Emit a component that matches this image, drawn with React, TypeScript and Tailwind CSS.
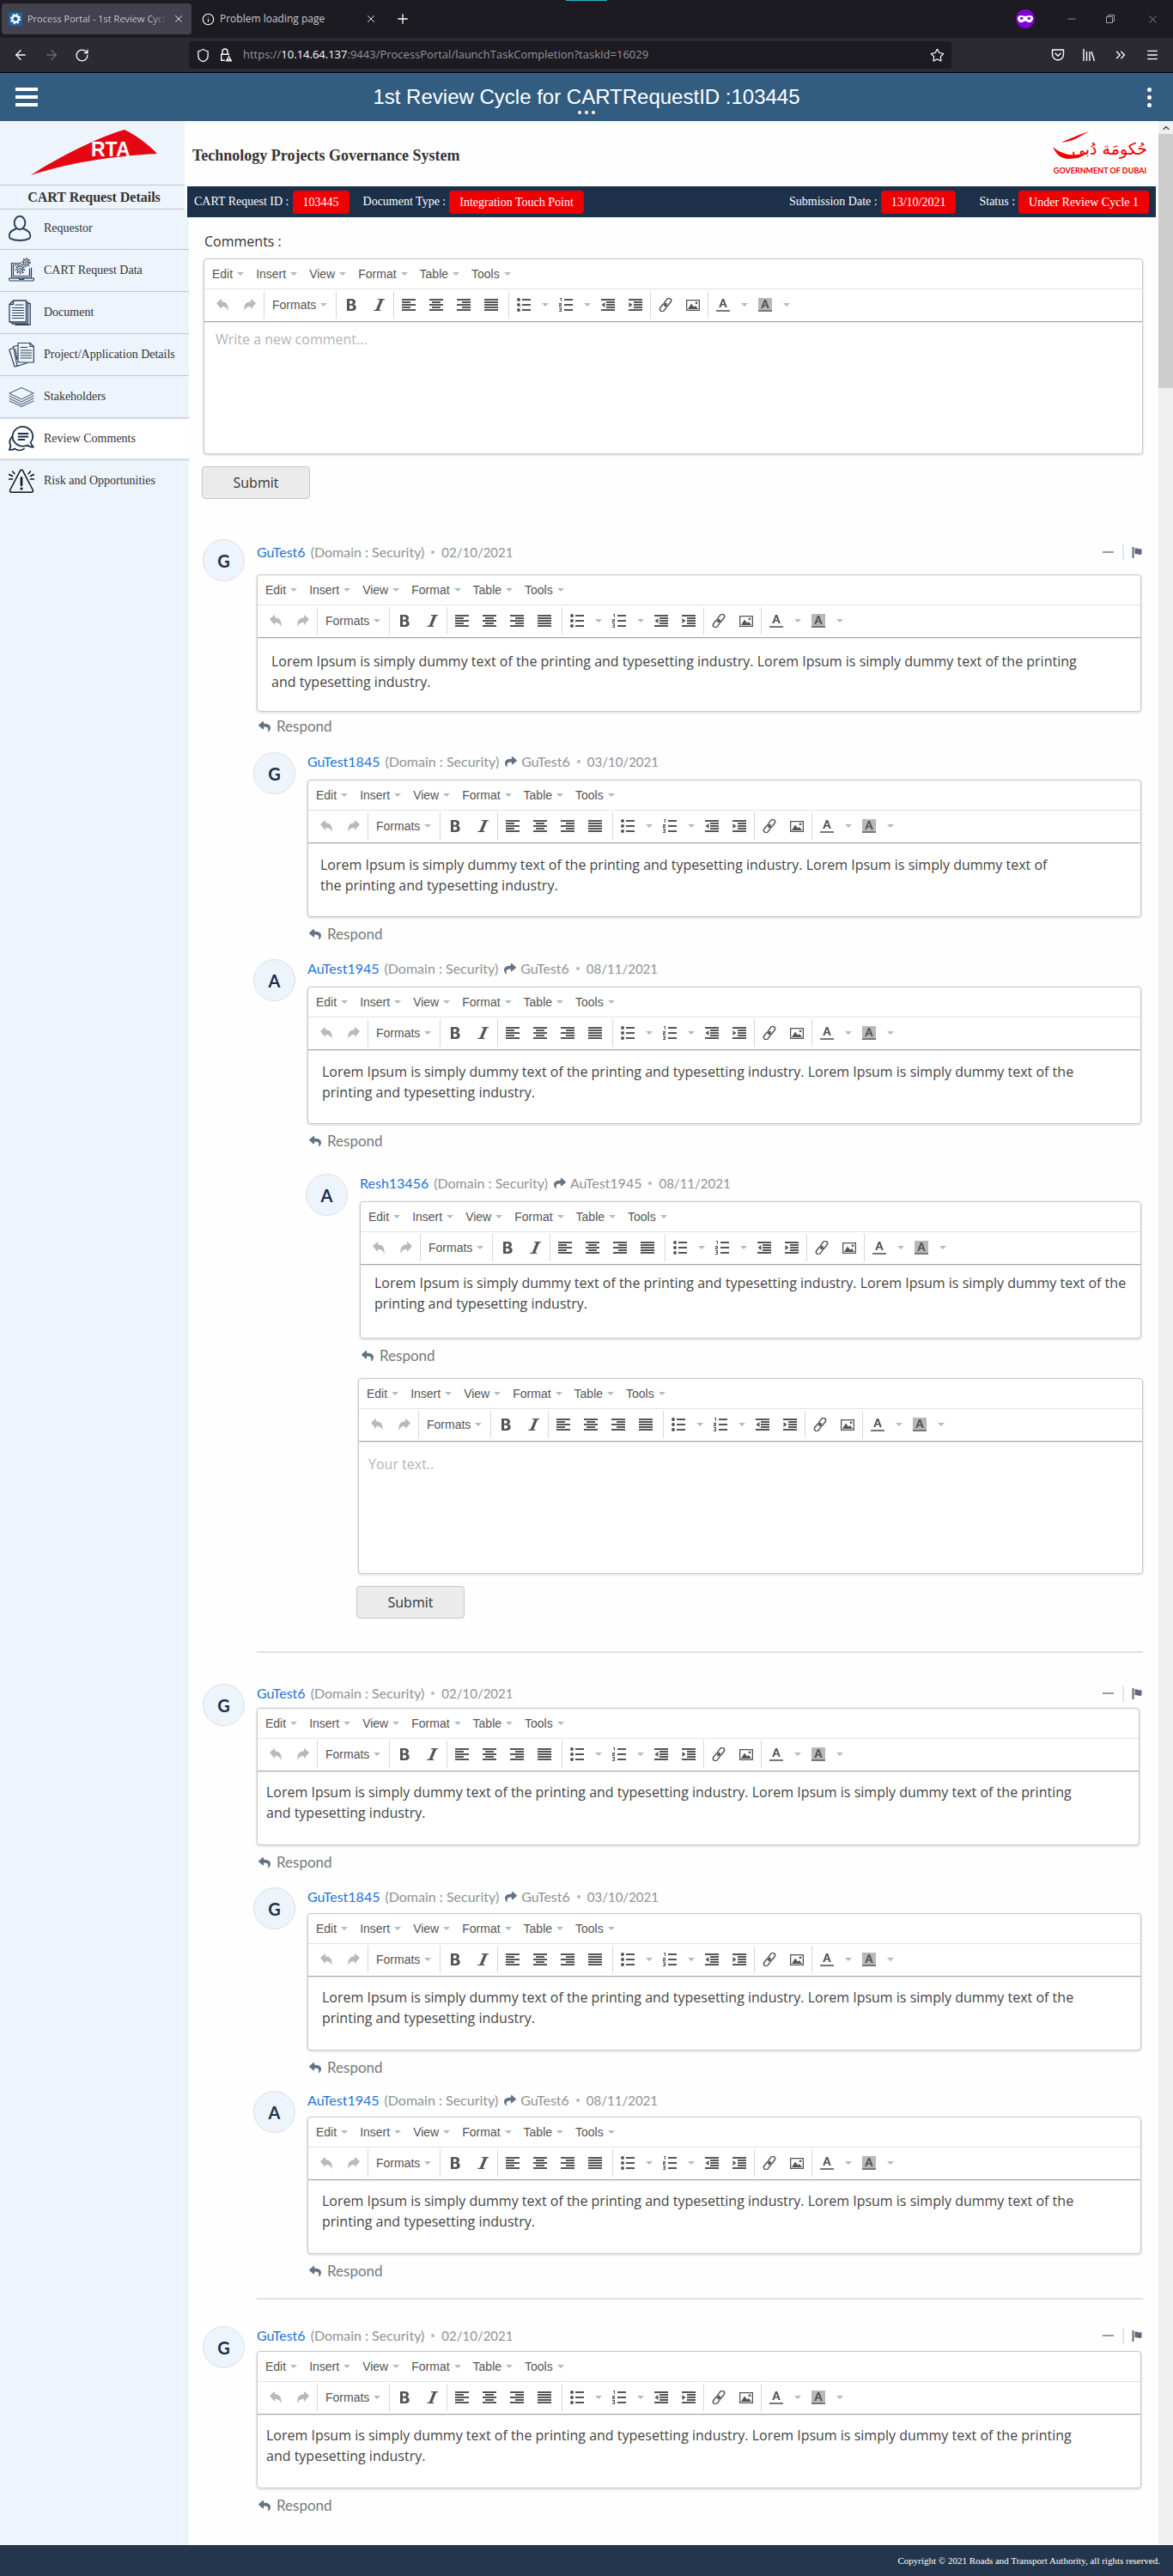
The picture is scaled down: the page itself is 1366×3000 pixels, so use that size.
import React from "react";
import {
  ArrowLeft,
  ArrowRight,
  ChevronUp,
  ChevronsRight,
  Info,
  Menu,
  Minus,
  Plus,
  RotateCw,
  Shield,
  Star,
  X,
} from "lucide-react";
import { FaReply, FaShare } from "react-icons/fa";

/* ---------- Browser chrome ---------- */

function TabFavicon() {
  return (
    <svg viewBox="0 0 16 16" className="h-4 w-4 shrink-0" aria-hidden="true">
      <rect width="16" height="16" rx="1" fill="#1b62a5" />
      <circle cx="8" cy="8" r="3.7" fill="none" stroke="#fff" strokeWidth="2.4" />
      <circle cx="8" cy="8" r="5.4" fill="none" stroke="#fff" strokeWidth="1.6" strokeDasharray="2.1 2.14" />
    </svg>
  );
}

function TabStrip() {
  return (
    <div className="relative flex h-11 items-center bg-[#1c1b22] pl-0.5 text-[#c9c9cd]">
      <div className="absolute top-0 left-1/2 h-px w-12 -translate-x-1/2 bg-[#25b4c8]" />
      <div className="flex h-9 w-[221px] items-center gap-1.5 rounded bg-[#42414d] pr-2 pl-2">
        <TabFavicon />
        <span className="flex-1 text-[11px] whitespace-nowrap [mask-image:linear-gradient(to_right,black_88%,transparent)]">
          Process Portal - 1st Review Cycl
        </span>
        <button aria-label="Close tab" className="text-white">
          <X size={14} strokeWidth={1.5} />
        </button>
      </div>
      <div className="flex h-9 w-[221px] items-center gap-1.5 pr-[5px] pl-3">
        <Info size={15} strokeWidth={1.8} className="text-white" />
        <span className="flex-1 text-xs whitespace-nowrap">Problem loading page</span>
        <button aria-label="Close tab" className="text-white">
          <X size={14} strokeWidth={1.5} />
        </button>
      </div>
      <button aria-label="New tab" className="ml-4 text-white">
        <Plus size={18} strokeWidth={1.7} />
      </button>
      <div className="ml-auto flex items-center text-[#a0a0a5]">
        <svg viewBox="0 0 22 22" className="mr-9 h-[22px] w-[22px]" aria-label="Private window">
          <circle cx="11" cy="11" r="11" fill="#8000d7" />
          <path
            d="M2 9.3C3 7 6 6.600 8.500 7.400c1.600.5 3.400.5 5 0 2.500-.8 5.500-.4 6.500 1.900.2 3-1.500 6-4.200 6-2.300 0-3.200-1.900-4.800-1.900s-2.500 1.900-4.800 1.900C3.500 15.300 1.800 12.300 2 9.300z"
            fill="#fff"
          />
          <ellipse cx="6.700" cy="10.400" rx="2" ry="1.300" fill="#8000d7" />
          <ellipse cx="15.300" cy="10.400" rx="2" ry="1.300" fill="#8000d7" />
        </svg>
        <button aria-label="Minimise" className="mr-8">
          <Minus size={14} strokeWidth={1.5} />
        </button>
        <button aria-label="Restore" className="mr-9">
          <svg viewBox="0 0 12 12" className="h-3 w-3" fill="none" stroke="currentColor">
            <path d="M1.500 3.500h7v7h-7zM3.500 3.500v-2h7v7h-2" />
          </svg>
        </button>
        <button aria-label="Close" className="mr-4">
          <X size={15} strokeWidth={1.3} />
        </button>
      </div>
    </div>
  );
}

function AddressBar() {
  return (
    <div className="flex h-[41px] items-center border-b border-black bg-[#2b2a33] text-[#fbfbfe]">
      <div className="flex w-[220px] items-center gap-[18px] pl-[15px]">
        <button aria-label="Back">
          <ArrowLeft size={18} strokeWidth={1.7} />
        </button>
        <button aria-label="Forward" className="text-[#6d6c75]">
          <ArrowRight size={18} strokeWidth={1.7} />
        </button>
        <button aria-label="Reload">
          <RotateCw size={17} strokeWidth={1.9} />
        </button>
      </div>
      <div className="flex h-8 flex-1 items-center rounded bg-[#1c1b22] pl-2">
        <Shield size={17} strokeWidth={1.8} />
        <svg viewBox="0 0 16 16" className="ml-2.5 h-4 w-4" fill="none" stroke="currentColor" strokeWidth="1.400" aria-hidden="true">
          <path d="M4 7V4a3 3 0 0 1 6 0v3M7 14.300H2.700V7.200h8.600v1" />
          <path d="M11.500 8.500l4 7h-8z" fill="#fbfbfe" stroke="none" />
          <path d="M11.500 11v2M11.500 13.800v.8" stroke="#1c1b22" strokeWidth="1" />
        </svg>
        <span className="ml-3 flex-1 text-[13px] whitespace-nowrap text-[#94939b]">
          https://<span className="text-[#fbfbfe]">10.14.64.137</span>
          :9443/ProcessPortal/launchTaskCompletion?taskId=16029
        </span>
        <button aria-label="Bookmark" className="mr-2">
          <Star size={17} strokeWidth={1.7} />
        </button>
      </div>
      <div className="ml-[116px] flex items-center gap-5 pr-4">
        <svg viewBox="0 0 16 16" className="h-4 w-4" fill="none" stroke="currentColor" strokeWidth="1.400" strokeLinecap="round" strokeLinejoin="round" aria-label="Pocket">
          <path d="M1.500 2h13v5.500a6.500 6.500 0 0 1-13 0zM5 6.300L8 9.200l3-2.900" />
        </svg>
        <svg viewBox="0 0 16 16" className="h-4 w-4" fill="none" stroke="currentColor" strokeWidth="1.400" aria-label="Library">
          <path d="M2 1v14M5.500 4v11M9 4v11M11 4l3.500 11" />
        </svg>
        <ChevronsRight size={18} strokeWidth={1.8} />
        <Menu size={16} strokeWidth={2} />
      </div>
    </div>
  );
}

/* ---------- Portal header ---------- */

function PortalHeader() {
  return (
    <header className="relative flex h-14 items-center justify-between bg-[#325c80] px-[18px] font-['Liberation_Sans',Arial,sans-serif] text-white">
      <button aria-label="Open menu" className="flex flex-col gap-[5px]">
        <span className="h-1 w-[26px] bg-white" />
        <span className="h-1 w-[26px] bg-white" />
        <span className="h-1 w-[26px] bg-white" />
      </button>
      <h1 className="text-2xl">1st Review Cycle for CARTRequestID :103445</h1>
      <button aria-label="More actions" className="flex w-[26px] flex-col items-center gap-1 pl-2">
        <span className="h-[5px] w-[5px] rounded-full bg-white" />
        <span className="h-[5px] w-[5px] rounded-full bg-white" />
        <span className="h-[5px] w-[5px] rounded-full bg-white" />
      </button>
      <div className="absolute bottom-2 left-1/2 flex -translate-x-1/2 gap-1">
        <span className="h-1 w-1 rounded-full bg-white" />
        <span className="h-1 w-1 rounded-full bg-white" />
        <span className="h-1 w-1 rounded-full bg-white" />
      </div>
    </header>
  );
}

/* ---------- Sidebar ---------- */

const icon = "h-[30px] w-[30px] shrink-0";
const line = { fill: "none", stroke: "#2c4058", strokeLinejoin: "round", strokeLinecap: "round" } as const;

function UserIcon() {
  return (
    <svg viewBox="0 0 30 30" className={icon} {...line} strokeWidth="1.900">
      <ellipse cx="13" cy="8.500" rx="6.300" ry="7.700" />
      <path d="M8.500 15.500c-4 1.500-7.700 3.600-7.700 7.500 0 1.800 0 3.200 1 3.600 6 3.200 16.500 3.200 22.500 0 1-.5 1-1.800 1-3.600 0-3.900-3.800-6-7.800-7.500" />
    </svg>
  );
}

function Gear({ cx, cy, r }: { cx: number; cy: number; r: number }) {
  return (
    <g strokeWidth="1">
      <circle cx={cx} cy={cy} r={r * 0.35} />
      <circle cx={cx} cy={cy} r={r * 0.72} fill="#edf4fc" />
      <circle cx={cx} cy={cy} r={r * 0.3} />
      <circle cx={cx} cy={cy} r={r} strokeWidth="1.500" strokeDasharray="1.600 1.800" strokeLinecap="butt" />
    </g>
  );
}

function LaptopIcon() {
  return (
    <svg viewBox="0 0 30 30" className={icon} {...line} strokeWidth="1.200">
      <path d="M14.500 6.500H3.500v17h23V12M12.500 8.500H5.500v13h19V13" />
      <path d="M.6 24h28.800v1.200c0 1.200-.6 1.800-1.800 1.800H2.400C1.200 27 .6 26.400.6 25.200zM12 24.300l1 1.200h4l1-1.200" />
      <Gear cx={20.500} cy={5.500} r={4.500} />
      <Gear cx={13.500} cy={13.500} r={5} />
    </svg>
  );
}

function DocumentIcon() {
  return (
    <svg viewBox="0 0 30 30" className={icon} {...line} strokeWidth="1.300">
      <path d="M5.500 1h15v25H1V5.500zM5.500 1v4.500H1M20.500 3h2v25H4v-2M23 4.500h2.200v24.800H8" />
      <path d="M8 6h9M4.500 9.500h13M4.500 12.500h13M4.500 15.500h13M4.500 18.500h13M4.500 21.500h13" strokeWidth="1.200" />
    </svg>
  );
}

function ProjectIcon() {
  return (
    <svg viewBox="0 0 30 30" className={icon} {...line} strokeWidth="1.200">
      <path d="M11 1.500h14l4.300 4V24H11zM25 1.500v4h4.300" />
      <path d="M14 6.500h8M14 10h12.500M14 13h12.500M14 16h12.500M14 19h12.500" strokeWidth="1.100" />
      <path d="M10.500 4.500L5.500 5.500l4.500 23 12-4M5.500 7L.8 9.200 7 29l4-1.300M8 8.500l1.800 12" />
    </svg>
  );
}

function LayersIcon() {
  return (
    <svg viewBox="0 0 30 30" className={icon} {...line} stroke="#5d6c80" strokeWidth="1.200">
      <path d="M15 4.500L29 11l-14 7L1 11z" />
      <path d="M1 14l14 7 14-7M1 17l14 7 14-7M1 20l14 6.500L29 20" />
    </svg>
  );
}

function ChatIcon() {
  return (
    <svg viewBox="0 0 30 30" className={icon} {...line} stroke="#1c3049" strokeWidth="1.800">
      <path d="M25.500 19.500A11.800 11.300 0 1 0 17 23.600c2.500 0 3.800-.4 5.200-1.100 1.900 1.900 4.200 2.500 6.800 2-1.700-1.300-2.700-3-3.500-5z" />
      <path d="M4 12.500C.5 17 .5 20 2.500 23c-.5 2.500-1 3.500-1.700 4.800 2.300.4 4.500 0 6.200-1.200 3.500 2.400 8 2.400 11 0" />
      <path d="M11.500 9h11M11.500 12.500h11M11.500 16h7" strokeWidth="1.800" />
    </svg>
  );
}

function RiskIcon() {
  return (
    <svg viewBox="0 0 30 30" className={icon} {...line} stroke="#111" strokeWidth="1.500">
      <path d="M13.500 3.200L1.800 25.500c-.7 1.300 0 2.700 1.500 2.700h23.400c1.500 0 2.200-1.400 1.500-2.700L16.500 3.200c-.8-1.300-2.200-1.300-3 0z" />
      <path d="M15 11.500v8.500" strokeWidth="2.600" />
      <circle cx="15" cy="24" r=".8" strokeWidth="1.500" />
      <path d="M.5 13h4M.5 7.500l4 2M4.500 4l2.500 2.700M29.500 13h-4M29.500 7.500l-4 2M25.500 4L23 6.700" />
    </svg>
  );
}

const navItems = [
  { label: "Requestor", Icon: UserIcon },
  { label: "CART Request Data", Icon: LaptopIcon },
  { label: "Document", Icon: DocumentIcon },
  { label: "Project/Application Details", Icon: ProjectIcon },
  { label: "Stakeholders", Icon: LayersIcon },
  { label: "Review Comments", Icon: ChatIcon, active: true },
  { label: "Risk and Opportunities", Icon: RiskIcon },
];

function RtaLogo() {
  return (
    <svg viewBox="0 0 148 56" className="h-14 w-[148px]" role="img" aria-label="RTA">
      <path d="M0 54C30 34 80 9 109 1c14 7 28 17 38 28C95 32 50 38 0 54z" fill="#e60613" />
      <text x="70" y="32" fill="#fff" fontFamily="Liberation Sans, Arial, sans-serif" fontWeight="700" fontSize="23">
        RTA
      </text>
    </svg>
  );
}

function Sidebar() {
  return (
    <aside className="w-[220px] shrink-0 bg-[#edf4fc] font-['Liberation_Serif','Times_New_Roman',serif] text-[#333]">
      <div className="bg-white pr-[5px]">
        <div className="flex h-[75px] items-start justify-center border-b border-[#c4c6c9] bg-[#edf4fc] pt-[9px] pl-1">
          <RtaLogo />
        </div>
        <h2 className="h-7 border-b border-[#c4c6c9] bg-[#edf4fc] pl-1 text-center text-base leading-7 font-bold">
          CART Request Details
        </h2>
      </div>
      <nav>
        <ul>
          {navItems.map(({ label, Icon, active }) => (
            <li key={label} className="border-b border-[#c4c6c9] py-0.5 first:pt-0 last:border-b-0">
              <a
                href="#"
                aria-current={active ? "page" : undefined}
                className={`flex h-11 items-center gap-[11px] pl-2.5 text-sm ${active ? "bg-white" : ""}`}
              >
                <Icon />
                {label}
              </a>
            </li>
          ))}
        </ul>
      </nav>
    </aside>
  );
}

/* ---------- Page heading ---------- */

function GovernmentLogo() {
  return (
    <svg viewBox="0 0 114 52" className="h-[52px] w-[114px]" role="img" aria-label="Government of Dubai">
      <text x="68" y="27" textAnchor="middle" fill="#ee0000" fontFamily="DejaVu Sans, sans-serif" fontSize="19">
        حُكومَة دُبي
      </text>
      <path d="M44 0C30 5 20 9 12 13c8-1 14-3 18-5M2 18c4 9 10 14 18 14 10 0 19-3 22-8-6 3-15 4-22 3C12 25 6 22 2 18z" fill="#ee0000" />
      <text x="57" y="49" textAnchor="middle" fill="#ee0000" fontFamily="Lato, sans-serif" fontWeight="700" fontSize="9">
        GOVERNMENT OF DUBAI
      </text>
    </svg>
  );
}

function Fact({ label, value }: { label: string; value: string }) {
  return (
    <div className="flex items-center gap-1">
      <dt>{label}</dt>
      <dd className="rounded bg-[#ee0000] px-3 leading-[27px]">{value}</dd>
    </div>
  );
}

function PageHeading() {
  return (
    <div className="pr-[3px] font-['Liberation_Serif','Times_New_Roman',serif]">
      <div className="flex h-[76px] items-start justify-between pr-2 pl-1">
        <h2 className="mt-[26px] text-lg font-bold text-[#333]">Technology Projects Governance System</h2>
        <div className="mt-3">
          <GovernmentLogo />
        </div>
      </div>
      <dl className="relative -ml-0.5 flex h-9 items-center justify-between bg-[#1c3049] pr-2 pl-2 text-sm text-white">
        <div className="flex gap-4">
          <Fact label="CART Request ID :" value="103445" />
          <Fact label="Document Type :" value="Integration Touch Point" />
        </div>
        <div className="flex gap-[27px]">
          <Fact label="Submission Date :" value="13/10/2021" />
          <Fact label="Status :" value="Under Review Cycle 1" />
        </div>
      </dl>
    </div>
  );
}

/* ---------- Rich text editor ---------- */

function Caret() {
  return (
    <svg viewBox="0 0 8 4" className="h-1 w-2 shrink-0" aria-hidden="true">
      <path d="M0 0h8L4 4z" fill="#b3bac0" />
    </svg>
  );
}

function ToolButton({ label, children }: { label: string; children: React.ReactNode }) {
  return (
    <button type="button" aria-label={label} className="flex h-8 w-8 items-center justify-center">
      <svg viewBox="0 0 16 16" className="h-4 w-4" fill="#555" aria-hidden="true">
        {children}
      </svg>
    </button>
  );
}

function DropButton({ label }: { label: string }) {
  return (
    <button type="button" aria-label={label} className="flex h-8 w-[17px] items-center justify-center">
      <Caret />
    </button>
  );
}

function ToolGroup({ children, className }: { children: React.ReactNode; className: string }) {
  return <div className={`flex h-8 border-[#d8d8d8] ${className}`}>{children}</div>;
}

const undoPath = "M1 6L7 .8v3.400c5.500.2 8.300 3.600 7.500 10.800-1.400-3.800-3.500-5-7.500-5v3.200z";

function Toolbar() {
  return (
    <div className="flex h-[38px] items-start border-b border-[#a3a5a7] pt-0.5 pl-[5px] shadow-[0_1px_1px_#ececec]">
      <ToolGroup className="border-r">
        <ToolButton label="Undo">
          <path d={undoPath} fill="#b9b9b9" />
        </ToolButton>
        <ToolButton label="Redo">
          <path d={undoPath} fill="#b9b9b9" transform="matrix(-1 0 0 1 16 0)" />
        </ToolButton>
      </ToolGroup>
      <ToolGroup className="border-r pl-px">
        <button type="button" className="flex h-8 w-[82px] items-center gap-[5px] pl-2 text-sm">
          Formats <Caret />
        </button>
      </ToolGroup>
      <ToolGroup className="border-r px-px">
        <ToolButton label="Bold">
          <path
            fillRule="evenodd"
            d="M3 1h5.500C11.300 1 13 2.300 13 4.500c0 1.500-.8 2.500-2 3 1.700.4 2.700 1.600 2.700 3.400C13.700 13.500 12 15 9 15H3zm3 2.200v3.500h1.500c1.500 0 2.300-.6 2.300-1.800s-.8-1.700-2.300-1.700zm0 5.600v4h1.800c1.700 0 2.500-.7 2.500-2s-.8-2-2.500-2z"
          />
        </ToolButton>
        <ToolButton label="Italic">
          <path d="M7 1h8v1.300h-2L8.300 13.700h2V15h-8v-1.300h2.500L9.500 2.300H7z" />
        </ToolButton>
      </ToolGroup>
      <ToolGroup className="border-r pr-1 pl-px">
        <ToolButton label="Align left">
          <path d="M0 1h16v2H0zM0 4h10v2H0zM0 7h16v2H0zM0 10h10v2H0zM0 13h16v2H0z" />
        </ToolButton>
        <ToolButton label="Align center">
          <path d="M0 1h16v2H0zM3 4h10v2H3zM0 7h16v2H0zM3 10h10v2H3zM0 13h16v2H0z" />
        </ToolButton>
        <ToolButton label="Align right">
          <path d="M0 1h16v2H0zM6 4h10v2H6zM0 7h16v2H0zM6 10h10v2H6zM0 13h16v2H0z" />
        </ToolButton>
        <ToolButton label="Justify">
          <path d="M0 1h16v2H0zM0 4h16v2H0zM0 7h16v2H0zM0 10h16v2H0zM0 13h16v2H0z" />
        </ToolButton>
      </ToolGroup>
      <ToolGroup className="border-r px-px">
        <ToolButton label="Bullet list">
          <circle cx="2" cy="2" r="2" />
          <circle cx="2" cy="8" r="2" />
          <circle cx="2" cy="14" r="2" />
          <path d="M6 1h10v2H6zM6 7h10v2H6zM6 13h10v2H6z" />
        </ToolButton>
        <DropButton label="Bullet list styles" />
        <ToolButton label="Numbered list">
          <path d="M6 1h10v2H6zM6 7h10v2H6zM6 13h10v2H6zM1 0h2v4H2V1H1zM0 6h3v2.500H1V9h2v1H0V7.500h2V7H0zM0 11h3v5H0v-1h2v-1H.5v-1H2v-1H0z" />
        </ToolButton>
        <DropButton label="Numbered list styles" />
        <ToolButton label="Decrease indent">
          <path d="M0 1h16v2H0zM6 4h10v2H6zM6 7h10v2H6zM6 10h10v2H6zM0 13h16v2H0zM4.500 5v6L.5 8z" />
        </ToolButton>
        <ToolButton label="Increase indent">
          <path d="M0 1h16v2H0zM6 4h10v2H6zM6 7h10v2H6zM6 10h10v2H6zM0 13h16v2H0zM.5 5v6l4-3z" />
        </ToolButton>
      </ToolGroup>
      <ToolGroup className="border-r px-px">
        <ToolButton label="Insert link">
          <g fill="none" stroke="#555" strokeWidth="1.500" transform="rotate(-52 8 8)">
            <rect x="-1" y="5.300" width="9.500" height="5.400" rx="2.700" />
            <rect x="7.500" y="5.300" width="9.500" height="5.400" rx="2.700" />
            <path d="M5.500 8h5" />
          </g>
        </ToolButton>
        <ToolButton label="Insert image">
          <path fillRule="evenodd" d="M0 2h16v13H0zm1.300 1.300v10.400h13.400V3.300z" />
          <path d="M2 13l4-6.500 3 4L11 9l3 4z" />
          <circle cx="12" cy="5.800" r="1.400" />
        </ToolButton>
      </ToolGroup>
      <ToolGroup className="pl-px">
        <ToolButton label="Text color">
          <path fillRule="evenodd" d="M7 1h2.200l3.600 10h-2.200l-.8-2.500H6.200L5.400 11H3.200zm1 2.500L6.800 7h2.500z" />
          <path d="M0 14h16v2H0z" fill="#777" />
        </ToolButton>
        <DropButton label="Text color options" />
        <ToolButton label="Background color">
          <path d="M0 0h16v16H0z" fill="#b8b8b8" />
          <path fillRule="evenodd" d="M7 2h2.200l3.600 10h-2.200L9.800 9.500H6.200L5.400 12H3.200zm1 2.500L6.800 8h2.500z" />
          <path d="M0 14h16v2H0z" fill="#777" />
        </ToolButton>
        <DropButton label="Background color options" />
      </ToolGroup>
    </div>
  );
}

type EditorProps = { label: string; text?: string; placeholder?: string; area: string };

function Editor({ label, text, placeholder, area }: EditorProps) {
  return (
    <div className="overflow-hidden rounded border border-[#c6c8ca] bg-white shadow-[0_1px_2px_1px_#e6e6e6]">
      <div className="font-['Liberation_Sans',Arial,sans-serif] text-[#555]">
        <div className="flex h-[35px] items-center gap-[14px] border-b border-[#e2e3e5] pl-[9px]">
          {["Edit", "Insert", "View", "Format", "Table", "Tools"].map((name) => (
            <button key={name} type="button" className="flex items-center gap-[5px] text-sm">
              {name} <Caret />
            </button>
          ))}
        </div>
        <Toolbar />
      </div>
      <textarea
        aria-label={label}
        defaultValue={text}
        placeholder={placeholder}
        className={`block w-full resize-none overflow-hidden text-base leading-6 text-[#444] outline-none placeholder:text-[#b4b4b4] ${area}`}
      />
    </div>
  );
}

function SubmitButton() {
  return (
    <button
      type="submit"
      className="-ml-0.5 block h-[38px] w-[126px] rounded border border-[#c8c8c8] bg-[#ebebeb] text-base text-[#333]"
    >
      Submit
    </button>
  );
}

/* ---------- Comments ---------- */

type CommentProps = {
  initial: string;
  name: string;
  date: string;
  replyTo?: string;
  text: string;
  label: string;
  area: string;
  className: string;
  headClass?: string;
  respondClass?: string;
  actions?: boolean;
  bodyClass?: string;
};

function Comment({
  initial,
  name,
  date,
  replyTo,
  text,
  label,
  area,
  className,
  headClass = "mb-2.5",
  respondClass = "mt-2.5",
  actions,
  bodyClass = "pr-0.5",
}: CommentProps) {
  return (
    <article className={`flex gap-[14px] ${className}`}>
      <div className="flex h-[49px] w-[49px] shrink-0 items-center justify-center rounded-full border border-[#dcdfe3] bg-[#edf4fc] font-['Lato',sans-serif] text-xl font-bold text-[#1c3049]">
        {initial}
      </div>
      <div className="min-w-0 flex-1">
        <div className={`flex h-[22px] items-center font-['Lato',sans-serif] text-base text-[#909396] ${headClass}`}>
          <a href="#" className="mr-1.5 text-[#1f74d6]">
            {name}
          </a>
          <span>(Domain : Security)</span>
          {replyTo && (
            <>
              <FaShare className="mr-1 ml-1.5 h-3.5 w-4 text-[#627383]" />
              <span>{replyTo}</span>
            </>
          )}
          <span className="mx-2 h-1 w-1 rounded-full bg-[#b3bac0]" />
          <time className="text-[15px]">{date}</time>
          {actions && (
            <div className="ml-auto flex items-center gap-[9px]">
              <button type="button" aria-label="Collapse thread" className="flex h-5 w-3.5 items-center">
                <span className="h-0.5 w-[13px] bg-[#979da8]" />
              </button>
              <span className="h-[19px] w-0.5 bg-[#e3e6ee]" />
              <button type="button" aria-label="Flag thread" className="pr-px">
                <svg viewBox="0 0 12 13" className="h-[13px] w-3" fill="#5f6879">
                  <path d="M.5 0h2v13h-2zM3.500 1.500C6 .3 7.500 3.500 11.500 2v6.500C7.500 10 6 7 3.500 8.200z" />
                </svg>
              </button>
            </div>
          )}
        </div>
        <div className={bodyClass}>
          <Editor label={label} text={text} area={area} />
        </div>
        <button
          type="button"
          className={`flex h-5 items-center gap-1.5 pl-px font-['Lato',sans-serif] text-[17px] text-[#76797c] ${respondClass}`}
        >
          <FaReply className="h-3.5 w-4 text-[#627383]" />
          Respond
        </button>
      </div>
    </article>
  );
}

const lorem = (breakAfter: "of" | "the" | "printing") => {
  const words = {
    of: "text of\nthe printing and",
    the: "text of the\nprinting and",
    printing: "text of the printing\nand",
  };
  return (
    "Lorem Ipsum is simply dummy text of the printing and typesetting industry. " +
    `Lorem Ipsum is simply dummy ${words[breakAfter]} typesetting industry.`
  );
};

function Comments() {
  return (
    <main className="flex flex-col pr-[18px] pb-[34px] pl-4 text-[#333]">
      <form className="pt-4 pl-px" onSubmit={(e) => e.preventDefault()}>
        <p className="mb-2 h-6 pl-px text-base leading-6">Comments :</p>
        <Editor
          label="Comments"
          placeholder="Write a new comment..."
          area="h-[153px] px-[13px] pt-2"
        />
        <div className="mt-[14px]">
          <SubmitButton />
        </div>
      </form>

      <section>
        <Comment
          initial="G"
          name="GuTest6"
          date="02/10/2021"
          text={lorem("printing")}
          label="Comment by GuTest6"
          area="h-[85px] pt-[15px] pl-4"
          className="mt-[47px]"
          headClass="mt-1 mb-[15px]"
          respondClass="mt-[7px]"
          actions
        />
        <Comment
          initial="G"
          name="GuTest1845"
          replyTo="GuTest6"
          date="03/10/2021"
          text={lorem("of")}
          label="Reply by GuTest1845"
          area="h-[85px] pt-[13px] pl-[14px]"
          className="mt-5 ml-[59px]"
        />
        <Comment
          initial="A"
          name="AuTest1945"
          replyTo="GuTest6"
          date="08/11/2021"
          text={lorem("the")}
          label="Reply by AuTest1945"
          area="h-[85px] pt-[13px] pl-4"
          className="mt-[19px] ml-[59px]"
        />
        <Comment
          initial="A"
          name="Resh13456"
          replyTo="AuTest1945"
          date="08/11/2021"
          text={lorem("the")}
          label="Reply by Resh13456"
          area="h-[85px] pt-[9px] pl-4"
          className="mt-7 ml-[120px]"
        />
        <form className="mt-4 ml-[181px]" onSubmit={(e) => e.preventDefault()}>
          <Editor label="Your reply" placeholder="Your text.." area="h-[153px] px-[11px] pt-[14px]" />
          <div className="mt-[14px]">
            <SubmitButton />
          </div>
        </form>
      </section>

      <hr className="mt-[38px] ml-[63px] border-t-2 border-[#dfe0e2]" />

      <section>
        <Comment
          initial="G"
          name="GuTest6"
          date="02/10/2021"
          text={lorem("printing")}
          label="Comment by GuTest6"
          area="h-[85px] pt-3 pl-2.5"
          className="mt-9"
          headClass="mb-1.5"
          actions
          bodyClass="pr-1"
        />
        <Comment
          initial="G"
          name="GuTest1845"
          replyTo="GuTest6"
          date="03/10/2021"
          text={lorem("the")}
          label="Reply by GuTest1845"
          area="h-[85px] pt-3 pl-4"
          className="mt-[19px] ml-[59px]"
          headClass="mb-2"
        />
        <Comment
          initial="A"
          name="AuTest1945"
          replyTo="GuTest6"
          date="08/11/2021"
          text={lorem("the")}
          label="Reply by AuTest1945"
          area="h-[85px] pt-3 pl-4"
          className="mt-[17px] ml-[59px]"
          headClass="mb-2"
        />
      </section>

      <hr className="mt-[21px] ml-[63px] border-t-2 border-[#dfe0e2]" />

      <section>
        <Comment
          initial="G"
          name="GuTest6"
          date="02/10/2021"
          text={lorem("printing")}
          label="Comment by GuTest6"
          area="h-[85px] pt-3 pl-2.5"
          className="mt-[31px]"
          headClass="mb-[7px]"
          actions
        />
      </section>
    </main>
  );
}

function ScrollTrack() {
  return (
    <div className="w-[17px] shrink-0 bg-[#f0f0f0]" aria-hidden="true">
      <div className="flex h-[15px] items-center justify-center text-[#505050]">
        <ChevronUp size={12} strokeWidth={3} />
      </div>
      <div className="h-[296px] bg-[#cdcdcd]" />
    </div>
  );
}

export default function App() {
  return (
    <div className="flex min-h-screen flex-col bg-[#fefefe] font-['Open_Sans',sans-serif]">
      <TabStrip />
      <AddressBar />
      <PortalHeader />
      <div className="flex flex-1">
        <Sidebar />
        <div className="min-w-0 flex-1">
          <PageHeading />
          <Comments />
        </div>
        <ScrollTrack />
      </div>
      <footer className="flex h-9 items-center justify-end bg-[#24364d] pr-[15px] font-['Liberation_Serif','Times_New_Roman',serif] text-[11px] text-white">
        Copyright © 2021 Roads and Transport Authority, all rights reserved.
      </footer>
    </div>
  );
}
